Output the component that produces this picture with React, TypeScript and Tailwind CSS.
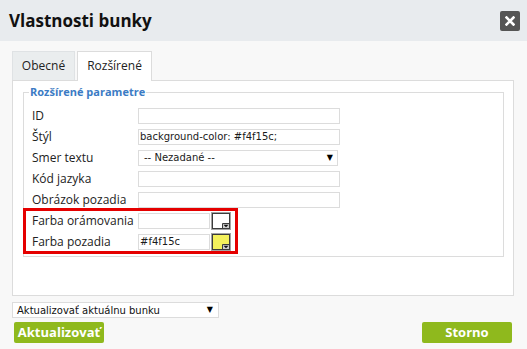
const inputCls =
  "h-[16px] border border-[#dcdcdc] bg-white px-[1px] text-[10px] leading-[14px] text-[#1a1a1a] font-['DejaVu_Sans',sans-serif] outline-none";

const ColorButton = ({ color }: { color: string }) => (
  <svg width="20" height="18" viewBox="0 0 20 18" className="shrink-0 block">
    <rect x="0" y="0" width="20" height="18" fill="#a3a3a3" />
    <rect x="1" y="1" width="18" height="16" fill="#3c3c3c" />
    <rect x="2" y="2" width="16" height="14" fill={color} />
    <path d="M11.5 16 V11.5 H18" fill="none" stroke="#3c3c3c" strokeWidth="1" />
    <rect x="12" y="12" width="6" height="4" fill="#cfcfcf" />
    <path d="M12.5 12.8 H17.5 L15 15.3 Z" fill="#111" />
  </svg>
);

const Row = ({ label, children }: { label: string; children: React.ReactNode }) => (
  <div className="flex items-center h-[21px]">
    <span className="w-[106px] shrink-0 text-[12px] leading-[16px]">{label}</span>
    {children}
  </div>
);

export default function App() {
  return (
    <div className="w-[527px] h-[349px] overflow-hidden bg-[#f8f8f8] flex flex-col font-['Open_Sans',sans-serif] text-[#222]">
      {/* Header */}
      <div className="h-[41px] shrink-0 bg-[#e8ebee] flex items-center justify-between pl-[9px] pr-[7px]">
        <h1 className="text-[17px] font-bold text-[#111] leading-none">Vlastnosti bunky</h1>
        <button className="w-[20px] h-[20px] rounded-[2px] bg-[#555] flex items-center justify-center">
          <svg width="10" height="10" viewBox="0 0 10 10">
            <path d="M1.5 1.5 L8.5 8.5 M8.5 1.5 L1.5 8.5" stroke="#fff" strokeWidth="2.6" strokeLinecap="square" />
          </svg>
        </button>
      </div>

      <div className="pl-[12px] pt-[10px]">
        {/* Tabs */}
        <div className="flex gap-[2px] h-[29px] relative z-10">
          <div className="w-[63px] h-[29px] bg-[#eaedee] border border-[#dfe2e4] border-b-0 flex items-center justify-center text-[12px]">
            Obecné
          </div>
          <div className="w-[75px] h-[30px] bg-white border border-[#dcdcdc] border-b-0 flex items-center justify-center text-[12px] pb-[1px]">
            Rozšírené
          </div>
        </div>

        {/* Panel */}
        <div className="w-[502px] h-[216px] bg-white border border-[#dcdcdc] pl-[10px] pr-[9px] pt-[3px]">
          <fieldset className="border border-[#dcdcdc] pl-[8px] pb-[4px] relative">
            <legend className="ml-[-3px] px-[1px] text-[11px] leading-[16px] font-bold text-[#3b7bc4]">
              Rozšírené parametre
            </legend>
            <div className="pt-[5px] flex flex-col">
              <Row label="ID">
                <input className={`${inputCls} w-[202px]`} defaultValue="" />
              </Row>
              <Row label="Štýl">
                <input className={`${inputCls} w-[202px]`} defaultValue="background-color: #f4f15c;" />
              </Row>
              <Row label="Smer textu">
                <div className={`${inputCls} w-[200px] flex items-center justify-between pl-[5px] pr-[4px]`}>
                  <span>-- Nezadané --</span>
                  <span className="text-[8px] text-black">▼</span>
                </div>
              </Row>
              <Row label="Kód jazyka">
                <input className={`${inputCls} w-[202px]`} defaultValue="" />
              </Row>
              <Row label="Obrázok pozadia">
                <input className={`${inputCls} w-[202px]`} defaultValue="" />
              </Row>
              <div className="relative">
                <Row label="Farba orámovania">
                  <input className={`${inputCls} w-[72px]`} defaultValue="" />
                  <div className="ml-[1px]">
                    <ColorButton color="#ffffff" />
                  </div>
                </Row>
                <Row label="Farba pozadia">
                  <input className={`${inputCls} w-[72px]`} defaultValue="#f4f15c" />
                  <div className="ml-[1px]">
                    <ColorButton color="#f4f15c" />
                  </div>
                </Row>
                <span className="absolute left-[-9px] top-[-2px] w-[215px] h-[46px] border-[3px] border-[#e50000] pointer-events-none" />
              </div>
            </div>
          </fieldset>
        </div>

        {/* Apply scope */}
        <div className="mt-[6px] w-[207px] h-[16px] border border-[#dcdcdc] bg-white flex items-center justify-between pl-[4px] pr-[5px] text-[10px] text-[#111] font-['DejaVu_Sans',sans-serif]">
          <span>Aktualizovať aktuálnu bunku</span>
          <span className="text-[8px] text-black">▼</span>
        </div>

        {/* Buttons */}
        <div className="mt-[4px] flex justify-between w-[500px]">
          <button className="ml-[2px] w-[90px] h-[21px] rounded-[2px] bg-[#8fb91d] text-white text-[13px] font-bold leading-none">
            Aktualizovať
          </button>
          <button className="w-[90px] h-[21px] rounded-[2px] bg-[#8fb91d] text-white text-[13px] font-bold leading-none">
            Storno
          </button>
        </div>
      </div>
    </div>
  );
}
